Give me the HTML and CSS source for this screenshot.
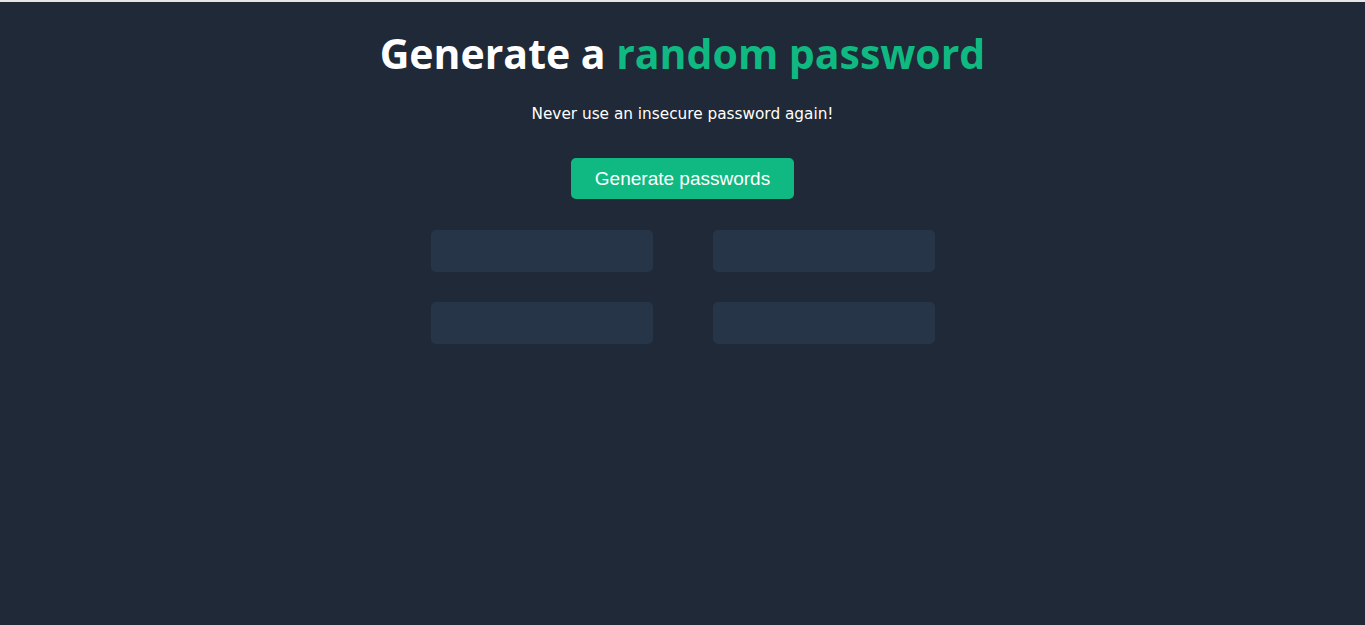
FILE: index.html
```html
<!DOCTYPE html>
<html lang="en">
<head>
<meta charset="utf-8">
<title>Password Generator</title>
<link rel="stylesheet" href="styles.css">
</head>
<body>
<div class="topline"></div>
<main class="app">
  <h1 class="title">Generate a <span class="accent">random password</span></h1>
  <p class="subtitle">Never use an insecure password again!</p>
  <button class="btn" type="button">Generate passwords</button>
  <div class="results">
    <div class="slot"></div>
    <div class="slot"></div>
    <div class="slot"></div>
    <div class="slot"></div>
  </div>
</main>
</body>
</html>
```
FILE: styles.css
```css
html, body {
  margin: 0;
  padding: 0;
  height: 100%;
}
body {
  background: #1F2937;
}
.topline {
  height: 2px;
  background: #e6e6e6;
}
.app {
  display: flex;
  flex-direction: column;
  align-items: center;
  padding-top: 26px;
}
.title {
  margin: 0;
  font-family: "Open Sans", sans-serif;
  font-weight: 700;
  font-size: 41px;
  line-height: 50px;
  color: #ffffff;
}
.accent {
  color: #10B981;
}
.subtitle {
  margin: 26px 0 0;
  font-family: "DejaVu Sans", sans-serif;
  font-size: 15.3px;
  line-height: 20px;
  color: #ffffff;
}
.btn {
  margin-top: 34px;
  width: 223px;
  height: 41px;
  border: none;
  border-radius: 5px;
  background: #10B981;
  color: #ffffff;
  font-family: "Liberation Sans", Arial, sans-serif;
  font-size: 19px;
  cursor: pointer;
}
.results {
  margin-top: 31px;
  display: grid;
  grid-template-columns: 222px 222px;
  column-gap: 60px;
  row-gap: 30px;
}
.slot {
  height: 42px;
  border-radius: 5px;
  background: #273549;
}
```
